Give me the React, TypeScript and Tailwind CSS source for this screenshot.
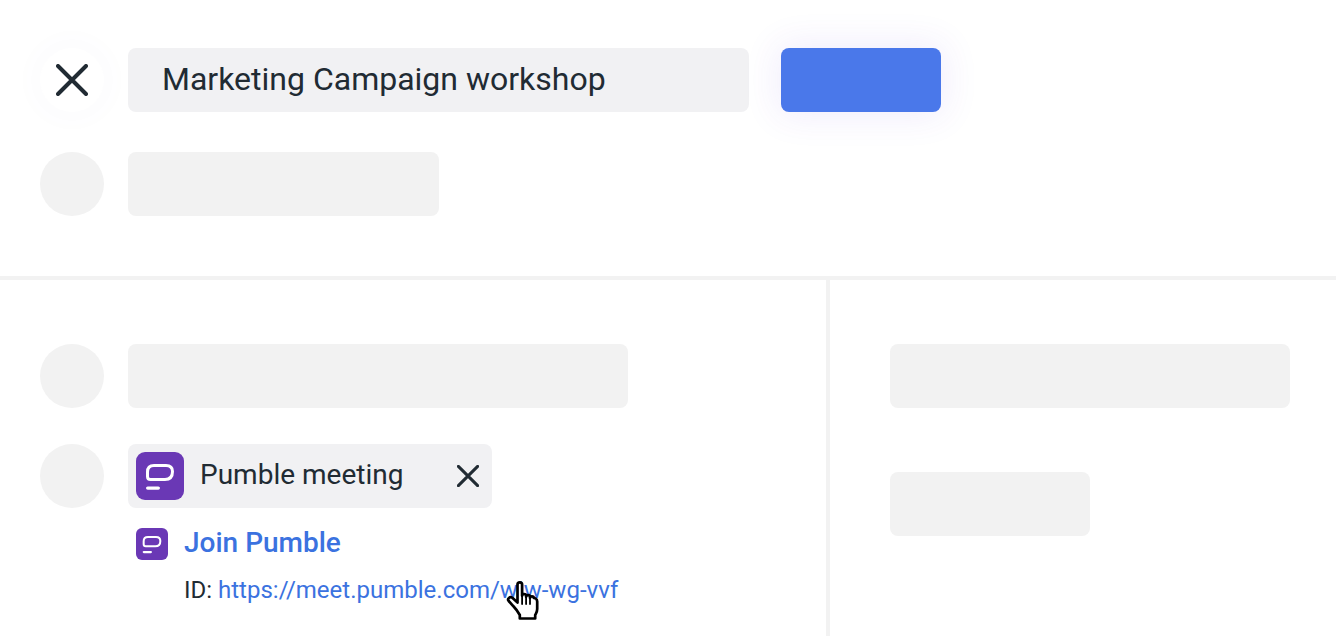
function PumbleIcon({ size, className }: { size: number; className?: string }) {
  return (
    <svg width={size} height={size} viewBox="0 0 48 48" className={className}>
      <rect width="48" height="48" rx="9" fill="#6A38B5" />
      <path d="M18 13.5H30Q36.5 13.5 36.5 19.5Q36.5 27.5 29 27.5H14.5Q11.5 27.5 11.5 24.5V20Q11.5 13.5 18 13.5Z" fill="none" stroke="#fff" strokeWidth="3" strokeLinejoin="round" />
      <rect x="10" y="34.4" width="14" height="3.4" rx="1.7" fill="#fff" />
    </svg>
  );
}

function Cursor() {
  return (
    <svg width="36" height="40" viewBox="0 0 36 40" className="absolute left-[505px] top-[581px]">
      <path
        d="M12.5 3.6c0-3 4.6-3 4.6 0v11.2c0-2.4 4-2.4 4 0v1c0-2.3 3.9-2.3 3.9 0v1.2c0-2.2 3.8-2.2 3.8 0 .8 0 3.4.6 3.4 3.5v7.5c0 3-1.2 4.4-2 6v3.5H14.8v-3.5c-1.3-2.2-4.3-6.6-6.8-9.2L3.7 20c-1.8-2.2 1.3-5 3.6-3.2l5.2 4.7z"
        fill="#fff"
        stroke="#000"
        strokeWidth="2.7"
        strokeLinejoin="round"
      />
      <path d="M17.1 15v8M21.1 15.8v7.2M25 17v6" stroke="#000" strokeWidth="1.8" strokeLinecap="round" fill="none" />
    </svg>
  );
}

function CloseIcon({ size, stroke }: { size: number; stroke: number }) {
  return (
    <svg width={size} height={size} viewBox="0 0 32 32">
      <path d="M2 2 30 30M30 2 2 30" stroke="#212B33" strokeWidth={stroke} strokeLinecap="round" fill="none" />
    </svg>
  );
}

export default function App() {
  return (
    <div className="relative w-[1336px] h-[636px] overflow-hidden bg-white font-['Roboto',sans-serif] text-[#212B33]">
      <div className="h-[280px] border-b-4 border-[#F2F2F2] pt-12 flex flex-col gap-10 pl-10">
        <div className="flex items-center h-16">
          <div className="w-16 h-16 rounded-full flex items-center justify-center bg-white shadow-[0_0_20px_14px_rgba(90,90,140,0.012)]">
            <CloseIcon size={32} stroke={4} />
          </div>
          <div className="ml-6 w-[621px] h-16 rounded-lg bg-[#F1F1F3] flex items-center pl-[34px] text-[32px] leading-none pb-0.5">
            Marketing Campaign workshop
          </div>
          <div className="ml-8 w-40 h-16 rounded-lg bg-[#4A78EA] shadow-[0_0_36px_4px_rgba(100,50,220,0.09)]" />
        </div>
        <div className="flex items-center gap-6">
          <div className="w-16 h-16 rounded-full bg-[#F2F2F2]" />
          <div className="w-[311px] h-16 rounded-lg bg-[#F2F2F2]" />
        </div>
      </div>
      <div className="flex h-[356px]">
        <div className="w-[830px] border-r-4 border-[#F2F2F2] pt-16 pl-10 flex flex-col gap-9">
          <div className="flex gap-6">
            <div className="w-16 h-16 rounded-full bg-[#F2F2F2]" />
            <div className="w-[500px] h-16 rounded-lg bg-[#F2F2F2]" />
          </div>
          <div className="flex gap-6">
            <div className="w-16 h-16 rounded-full bg-[#F2F2F2]" />
            <div className="flex flex-col">
              <div className="w-[364px] h-16 rounded-lg bg-[#F1F1F3] flex items-center pl-2">
                <PumbleIcon size={48} />
                <span className="ml-4 text-[28px] leading-none pb-0.5">Pumble meeting</span>
                <span className="ml-auto mr-[13px] flex">
                  <CloseIcon size={22} stroke={4.4} />
                </span>
              </div>
              <div className="mt-5 ml-2 flex items-center h-8 gap-4">
                <PumbleIcon size={32} />
                <span className="text-[28px] leading-none font-medium text-[#3B72E0] pb-0.5">Join Pumble</span>
              </div>
              <div className="mt-4 ml-14 text-2xl leading-7 whitespace-nowrap">
                ID: <span className="text-[#3B72E0]">https://meet.pumble.com/wiw-wg-vvf</span>
              </div>
            </div>
          </div>
        </div>
        <div className="pt-16 pl-[60px] flex flex-col gap-16">
          <div className="w-[400px] h-16 rounded-lg bg-[#F2F2F2]" />
          <div className="w-[200px] h-16 rounded-lg bg-[#F2F2F2]" />
        </div>
      </div>
      <Cursor />
    </div>
  );
}
